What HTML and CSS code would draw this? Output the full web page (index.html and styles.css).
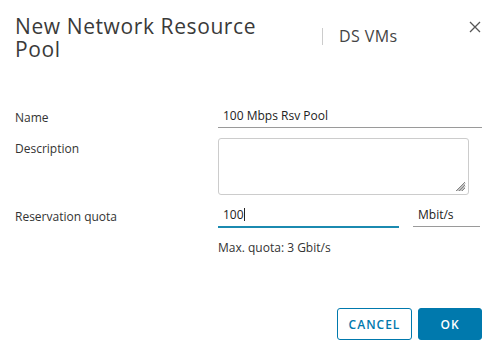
FILE: index.html
```html
<!DOCTYPE html>
<html>
<head>
<meta charset="utf-8">
<link rel="stylesheet" href="styles.css">
</head>
<body>
<div class="dialog">
  <div class="header">
    <h1 class="title">New Network Resource Pool</h1>
    <div class="subtitle">DS VMs</div>
    <button class="close" aria-label="Close">
      <svg width="12" height="12" viewBox="0 0 12 12"><path d="M1 1 L11 11 M11 1 L1 11" stroke="#565656" stroke-width="1.3" fill="none"/></svg>
    </button>
  </div>
  <div class="form">
    <div class="row row-name">
      <label class="label">Name</label>
      <div class="field"><div class="input">100 Mbps Rsv Pool</div></div>
    </div>
    <div class="row row-desc">
      <label class="label">Description</label>
      <div class="field"><div class="textarea">
        <svg class="grip" width="12" height="12" viewBox="0 0 12 12"><path d="M11 2 L2 11 M11 5 L5 11 M11 8 L8 11 M11 3.5 L3.5 11 M11 6.5 L6.5 11" stroke="#777" stroke-width="0.9"/></svg>
      </div></div>
    </div>
    <div class="row row-quota">
      <label class="label">Reservation quota</label>
      <div class="field quota">
        <div class="input active">100<span class="caret"></span></div>
        <div class="input unit">Mbit/s</div>
      </div>
    </div>
    <div class="row row-help">
      <div class="label"></div>
      <div class="help">Max. quota: 3 Gbit/s</div>
    </div>
  </div>
  <div class="footer">
    <button class="btn btn-outline">CANCEL</button>
    <button class="btn btn-primary">OK</button>
  </div>
</div>
</body>
</html>
```
FILE: styles.css
```css
* { box-sizing: border-box; }
html, body { margin: 0; padding: 0; background: #fff; }
body { font-family: "Open Sans", "Lato", sans-serif; color: #333; width: 496px; height: 356px; overflow: hidden; }
.dialog { padding: 13px 14px 0 15px; }
.header { display: flex; align-items: flex-start; height: 80px; }
.title { margin: 0; width: 307px; padding-right: 40px; font-size: 21px; line-height: 23px; font-weight: 400; color: #3a3a3a; letter-spacing: 0.6px; padding-top: 2px; }
.subtitle { border-left: 1px solid #ccc; margin-top: 15px; padding-left: 16px; height: 17px; line-height: 16px; font-size: 16px; color: #444; flex: 1; letter-spacing: 0.4px; }
.close { border: 0; background: none; padding: 0; margin-top: 8px; margin-right: 1px; width: 12px; height: 12px; display: flex; }
.form { display: flex; flex-direction: column; }
.row { display: flex; align-items: flex-start; }
.label { width: 203px; flex: none; font-size: 12px; color: #333; }
.field { flex: 1; }
.row-name { margin-top: 14px; }
.row-name .label { padding-top: 2px; }
.input { font-size: 12px; color: #222; padding: 2px 5px 5px 5px; border-bottom: 1px solid #9a9a9a; height: 21px; line-height: 14px; }
.row-desc { margin-top: 10px; }
.row-desc .label { padding-top: 2px; }
.textarea { width: 251px; height: 57px; border: 1px solid #ccc; border-radius: 3px; position: relative; }
.grip { position: absolute; right: 2px; bottom: 2px; }
.row-quota { margin-top: 11px; }
.row-quota .label { padding-top: 2px; }
.quota { display: flex; gap: 14px; }
.input.active { width: 181px; border-bottom: 2px solid #1b8ab0; height: 22px; }
.caret { display: inline-block; width: 1px; height: 13px; background: #222; vertical-align: -2px; }
.input.unit { width: 67px; }
.row-help { margin-top: 11px; }
.help { font-size: 12px; color: #333; }
.footer { display: flex; justify-content: flex-end; gap: 6px; margin-top: 52px; }
.btn { height: 32px; font-family: inherit; font-size: 12px; letter-spacing: 1px; border-radius: 3px; cursor: pointer; font-weight: 600; }
.btn-outline { width: 75px; background: #fff; color: #0079ad; border: 1px solid #0079ad; }
.btn-primary { width: 64px; background: #0079ad; color: #fff; border: 1px solid #0079ad; }
```
